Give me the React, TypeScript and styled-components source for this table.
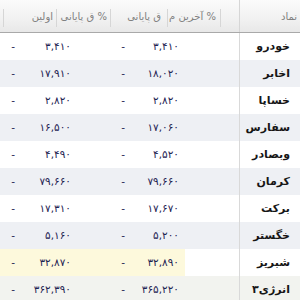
import styled, { createGlobalStyle } from "styled-components";

const GlobalStyle = createGlobalStyle`
  html, body {
    margin: 0;
    padding: 0;
    background: #ffffff;
    overflow: hidden;
  }
  body {
    font-family: "DejaVu Sans", "Noto Sans", sans-serif;
  }
`;

type Quote = {
  symbol: string;
  last: string;
  close: string;
  highlight?: boolean;
};

const quotes: Quote[] = [
  { symbol: "خودرو", last: "۳,۴۱۰", close: "۳,۴۱۰" },
  { symbol: "اخابر", last: "۱۸,۰۲۰", close: "۱۷,۹۱۰" },
  { symbol: "خساپا", last: "۲,۸۲۰", close: "۲,۸۲۰" },
  { symbol: "سفارس", last: "۱۷,۰۶۰", close: "۱۶,۵۰۰" },
  { symbol: "وبصادر", last: "۴,۵۲۰", close: "۴,۴۹۰" },
  { symbol: "کرمان", last: "۷۹,۶۶۰", close: "۷۹,۶۶۰" },
  { symbol: "برکت", last: "۱۷,۶۷۰", close: "۱۷,۳۱۰" },
  { symbol: "خگستر", last: "۵,۲۰۰", close: "۵,۱۶۰" },
  { symbol: "شبریز", last: "۳۲,۸۹۰", close: "۳۲,۸۷۰", highlight: true },
  { symbol: "انرژی۳", last: "۳۶۵,۲۲۰", close: "۳۶۲,۳۹۰" },
];

const headers = [
  { label: "نماد", width: 61, pad: 3 },
  { label: "", width: 19, pad: 3 },
  { label: "% آخرین م", width: 53, pad: 4 },
  { label: "ق پایانی", width: 57, pad: 6 },
  { label: "% ق پایانی", width: 54, pad: 3 },
  { label: "اولین", width: 53, pad: 3 },
  { label: "", width: 20, pad: 3 },
];

const App = () => {
  return (
    <>
      <GlobalStyle />
      <Watch>
        <HeaderRow>
          {headers.map((h, i) => (
            <HeaderCell key={i} $width={h.width} $pad={h.pad} $first={i === 0}>
              {h.label}
            </HeaderCell>
          ))}
        </HeaderRow>
        {quotes.map((q, i) => {
          const tone = i === quotes.length - 1 ? "sage" : i % 2 === 1 ? "blue" : "white";
          return (
            <Row key={q.symbol} $tone={tone}>
              <SymbolCell>{q.symbol}</SymbolCell>
              <Spacer />
              <DataCell $pad={6} $hl={q.highlight}>{q.last}</DataCell>
              <DataCell $pad={5} $hl={q.highlight}>-</DataCell>
              <DataCell $pad={4} $hl={q.highlight}>{q.close}</DataCell>
              <DataCell $pad={5} $hl={q.highlight}>-</DataCell>
            </Row>
          );
        })}
      </Watch>
    </>
  );
};

export default App;

const Watch = styled.div`
  direction: rtl;
  width: 300px;
  height: 300px;
  overflow: hidden;
  background: #ffffff;
`;

const HeaderRow = styled.div`
  display: flex;
  height: 32px;
  border-bottom: 1px solid #a9a9a9;
  background: linear-gradient(to bottom, #fbfbfb 0%, #f1f1f1 60%, #e8e8e8 100%);
`;

const HeaderCell = styled.div<{ $width: number; $pad: number; $first?: boolean }>`
  position: relative;
  flex: 0 0 ${(p) => p.$width}px;
  box-sizing: border-box;
  padding-right: ${(p) => p.$pad}px;
  padding-top: 2px;
  text-align: right;
  white-space: nowrap;
  overflow: hidden;
  font-size: 10px;
  line-height: 30px;
  color: #808080;

  &::after {
    content: "";
    position: absolute;
    left: 0;
    top: ${(p) => (p.$first ? 0 : 9)}px;
    bottom: ${(p) => (p.$first ? 0 : 5)}px;
    width: 1px;
    background: #d6d6d6;
    box-shadow: -1px 0 0 #ffffff;
  }
`;

const Row = styled.div<{ $tone: "white" | "blue" | "sage" }>`
  display: flex;
  height: 27px;
  background: ${(p) =>
    p.$tone === "blue" ? "#eef0f4" : p.$tone === "sage" ? "#f2f3ef" : "#ffffff"};
`;

const SymbolCell = styled.div`
  flex: 0 0 61px;
  box-sizing: border-box;
  border-left: 1px solid #d9d9d9;
  padding-right: 10px;
  text-align: right;
  white-space: nowrap;
  font-size: 11px;
  font-weight: bold;
  line-height: 27px;
  color: #161616;
`;

const Spacer = styled.div`
  flex: 0 0 54px;
`;

const DataCell = styled.div<{ $pad: number; $hl?: boolean }>`
  flex: 0 0 55px;
  box-sizing: border-box;
  padding-right: ${(p) => p.$pad}px;
  text-align: right;
  white-space: nowrap;
  font-size: 10.5px;
  line-height: 27px;
  color: #1e2352;
  background: ${(p) => (p.$hl ? "#fdf9dc" : "transparent")};
`;
